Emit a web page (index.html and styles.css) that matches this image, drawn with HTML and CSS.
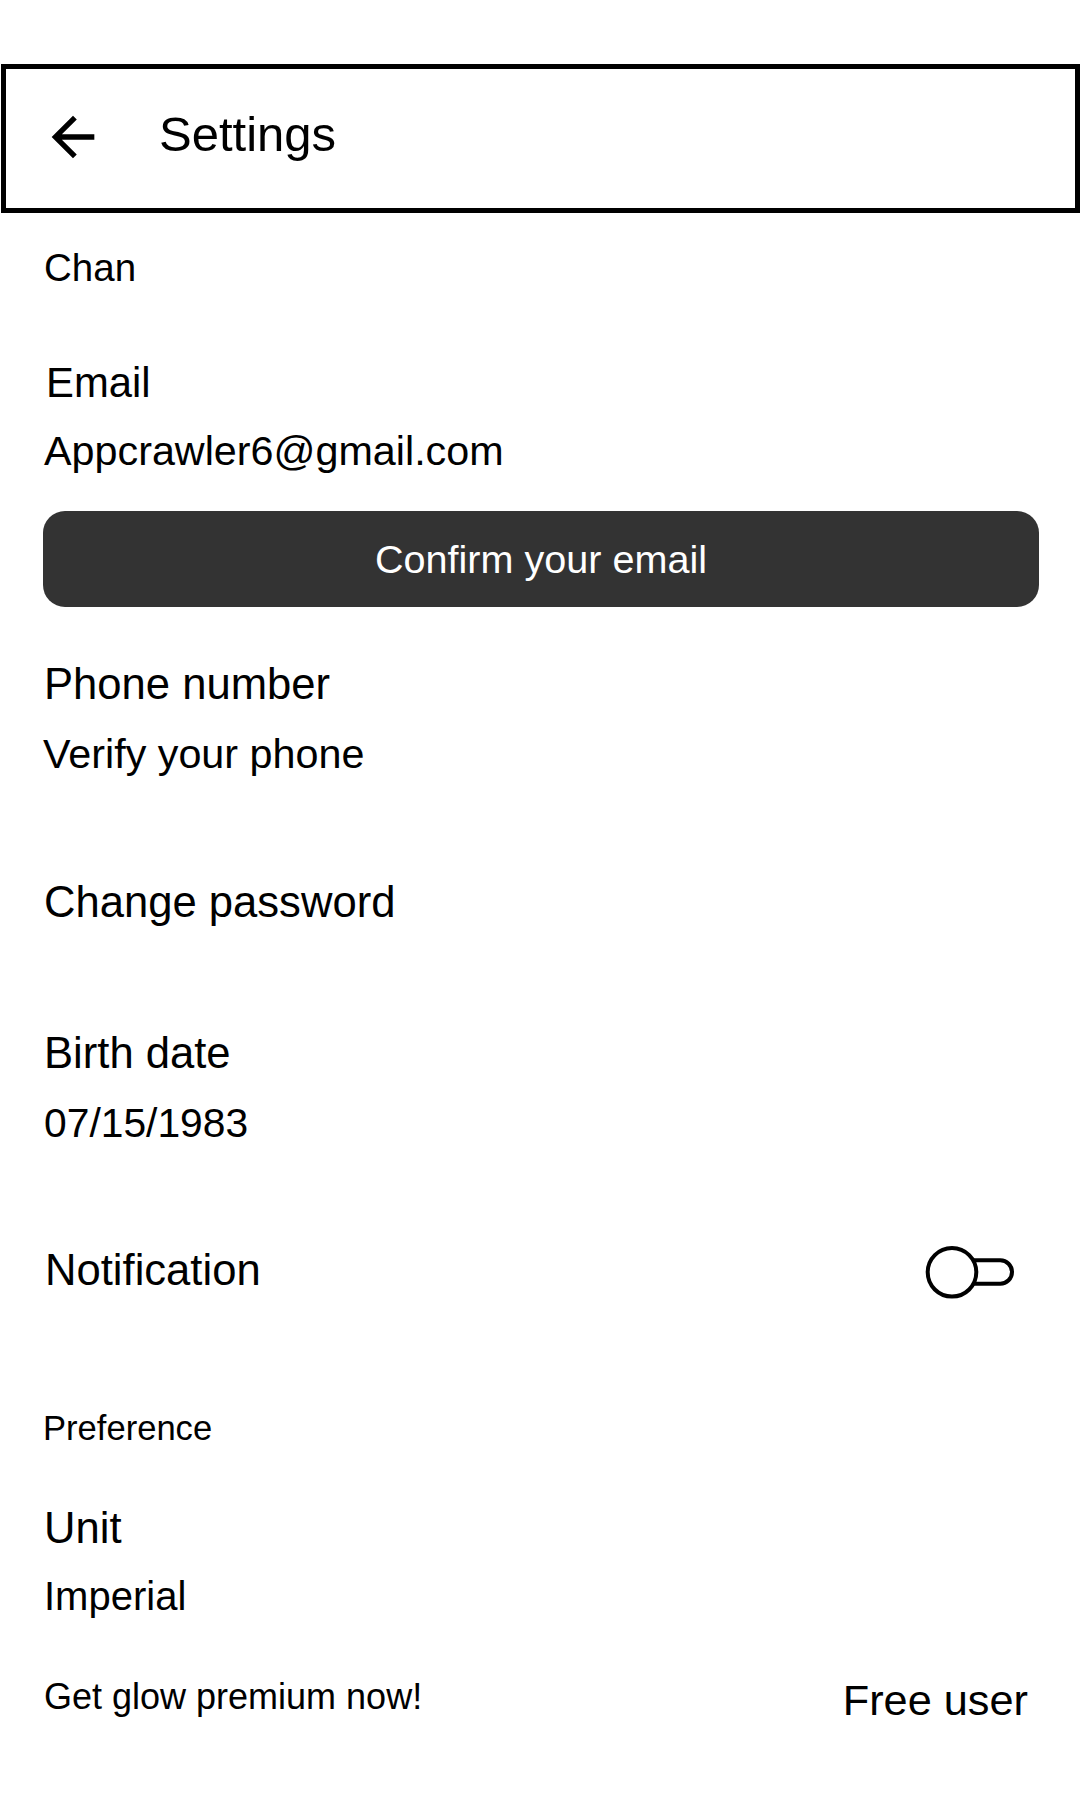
FILE: index.html
```html
<!DOCTYPE html>
<html lang="en">
<head>
<meta charset="utf-8">
<title>Settings</title>
<link rel="stylesheet" href="styles.css">
</head>
<body>
<header class="topbar">
  <svg class="back" viewBox="0 0 24 24" width="64" height="64" aria-hidden="true">
    <path d="M20 11H7.83l5.59-5.59L12 4l-8 8 8 8 1.41-1.41L7.83 13H20v-2z" fill="#000"/>
  </svg>
  <h1 class="title">Settings</h1>
</header>

<main class="content">
  <div class="name">Chan</div>

  <section class="field email">
    <div class="label">Email</div>
    <div class="value">Appcrawler6@gmail.com</div>
  </section>

  <button class="confirm">Confirm your email</button>

  <section class="field phone">
    <div class="label">Phone number</div>
    <div class="value">Verify your phone</div>
  </section>

  <div class="label single password">Change password</div>

  <section class="field birth">
    <div class="label">Birth date</div>
    <div class="value date">07/15/1983</div>
  </section>

  <div class="row notif">
    <div class="label">Notification</div>
    <svg class="toggle" width="92" height="56" viewBox="0 0 92 56" aria-hidden="true">
      <path d="M50 16.3 H76.3 A11.7 11.7 0 0 1 76.3 39.7 H50" fill="#fff" stroke="#000" stroke-width="4"/>
      <circle cx="28" cy="28.3" r="24.3" fill="#fff" stroke="#000" stroke-width="4"/>
    </svg>
  </div>

  <div class="section-title">Preference</div>

  <section class="field unit">
    <div class="label">Unit</div>
    <div class="value imperial">Imperial</div>
  </section>

  <div class="row footer">
    <div class="premium">Get glow premium now!</div>
    <div class="plan">Free user</div>
  </div>
</main>
</body>
</html>
```

FILE: styles.css
```css
html, body {
  margin: 0;
  padding: 0;
  background: #fff;
  overflow-x: hidden;
}

body {
  font-family: "Liberation Sans", Arial, sans-serif;
  color: #000;
}

.topbar {
  box-sizing: border-box;
  margin: 64px 0 0 1px;
  width: 1079px;
  height: 149px;
  border: 5px solid #000;
  display: flex;
  align-items: center;
  padding: 0 0 8px 35px;
}

.back {
  flex: none;
  display: block;
  margin-top: 5px;
}

.title {
  margin: 0 0 0 54px;
  font-size: 49px;
  font-weight: normal;
  line-height: 55px;
}

.content {
  padding: 0 44px;
  display: flex;
  flex-direction: column;
  align-items: stretch;
}

.name {
  font-size: 38.5px;
  line-height: 44.4px;
  margin-top: 33px;
}

.field {
  display: flex;
  flex-direction: column;
  gap: 20px;
}

.label {
  font-size: 43.6px;
  line-height: 50.4px;
}

.value {
  font-size: 41.3px;
  line-height: 48px;
}

.email {
  margin-top: 69px;
}

.email .label {
  font-size: 41.8px;
  line-height: 48px;
  padding-left: 2px;
}

.confirm {
  margin: 36px -3px 0 -1px;
  height: 96px;
  border: none;
  border-radius: 22px;
  background: #333333;
  color: #fff;
  font-family: "Liberation Sans", Arial, sans-serif;
  font-size: 39.6px;
  line-height: 47px;
  padding: 0;
  cursor: pointer;
}

.phone {
  margin-top: 52px;
}

.phone .value {
  margin-left: -1px;
}

.password {
  margin-top: 99px;
}

.birth {
  margin-top: 101px;
}

.date {
  font-size: 40.8px;
}

.row {
  display: flex;
  justify-content: space-between;
}

.notif {
  margin-top: 95px;
  align-items: center;
}

.notif .label {
  padding-left: 1px;
}

.toggle {
  display: block;
  margin-right: 20px;
  margin-top: 2px;
}

.section-title {
  font-size: 34.6px;
  line-height: 40.8px;
  margin-top: 108.5px;
  margin-left: -1px;
}

.unit {
  margin-top: 54px;
}

.imperial {
  font-size: 40px;
  line-height: 46.8px;
}

.footer {
  margin-top: 56px;
  align-items: flex-start;
}

.premium {
  font-size: 36px;
  line-height: 41.4px;
}

.plan {
  font-size: 43.3px;
  line-height: 50.4px;
  margin-right: 8px;
  margin-top: -1px;
}
```
